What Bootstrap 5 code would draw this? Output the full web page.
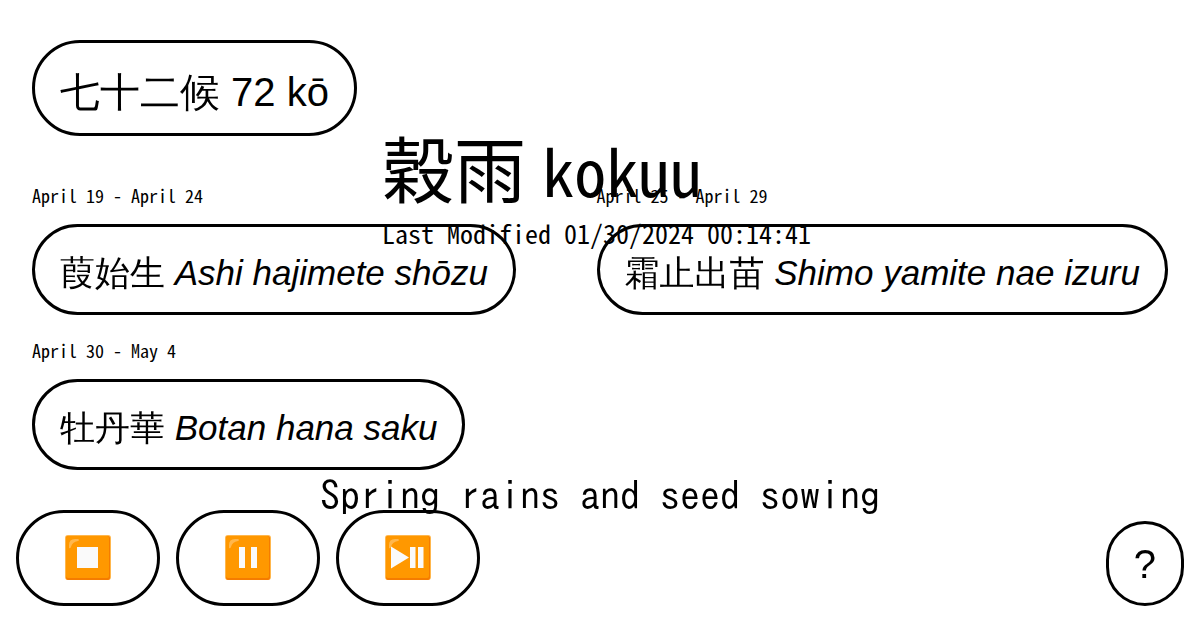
<!DOCTYPE html>
<html lang="ja">
<head>
<meta charset="utf-8">
<meta name="viewport" content="width=device-width, initial-scale=1">
<title>穀雨 kokuu</title>
<link href="https://cdn.jsdelivr.net/npm/bootstrap@5.3.0/dist/css/bootstrap.min.css" rel="stylesheet">
<style>
  body { color: #000; background: #fff; font-family: "Noto Sans Mono CJK JP", "Noto Sans CJK JP", monospace; }
  .pill { display: inline-block; border: 3px solid #000; border-radius: 50px; padding: 25px 25px 17px; background: transparent; color: #000; font-family: "Liberation Sans", "WenQuanYi Zen Hei", "Noto Sans CJK JP", sans-serif; font-size: 40px; line-height: 48px; text-decoration: none; white-space: nowrap; }
  .pill:hover { background: #eee; color: #000; }
  .pill-ko { font-size: 35px; line-height: 40px; padding: 26px 25px 19px; }
  .pill-icon { padding: 22px 46px; line-height: 45px; }
  .pill-help { padding: 16px 25px 15px; }
  .pill svg { display: block; }
  .site-top { padding-top: 40px; }
  .ko-list { padding-top: 50px; row-gap: 26px; }
  .ko-date { font-size: 18px; line-height: 18px; margin-bottom: 20px; }
  .term { top: 122px; z-index: 2; pointer-events: none; }
  .term-block { min-width: 436px; }
  .term-title { font-family: "Noto Sans CJK JP", sans-serif; font-size: 72px; font-weight: 400; line-height: 88px; margin: 0; }
  .term-title span { font-family: "Noto Sans Mono CJK JP", monospace; font-size: 64px; }
  .term-date { font-size: 26px; line-height: 40px; margin: 0; }
  .term-note { font-family: IPAGothic, "Noto Sans Mono CJK JP", monospace; font-size: 40px; line-height: 48px; bottom: 111px; z-index: 2; pointer-events: none; }
</style>
</head>
<body>
<header class="site-top px-3 mx-3">
  <a class="pill" href="#">七十二候 72 kō</a>
</header>
<div class="term position-absolute start-0 end-0 d-flex justify-content-center">
  <div class="term-block">
    <h1 class="term-title">穀雨 <span>kokuu</span></h1>
    <p class="term-date">Last Modified 01/30/2024 00:14:41</p>
  </div>
</div>
<main class="ko-list px-3 mx-3 d-flex flex-wrap justify-content-between">
  <section><div class="ko-date">April 19 - April 24</div><a class="pill pill-ko" href="#">葭始生 <i>Ashi hajimete shōzu</i></a></section>
  <section><div class="ko-date">April 25 - April 29</div><a class="pill pill-ko" href="#">霜止出苗 <i>Shimo yamite nae izuru</i></a></section>
  <section><div class="ko-date">April 30 - May 4</div><a class="pill pill-ko" href="#">牡丹華 <i>Botan hana saku</i></a></section>
</main>
<p class="term-note position-fixed start-0 end-0 text-center m-0">Spring rains and seed sowing</p>
<footer class="fixed-bottom d-flex justify-content-between align-items-end px-3 pb-4">
  <svg width="0" height="0" class="position-absolute" aria-hidden="true">
    <symbol id="tile" viewBox="0 0 46 46">
      <rect x="0" y="0" width="46" height="45" rx="3" fill="#ffb74d"/>
      <rect x="1" y="1" width="44" height="44" rx="2" fill="#f57c00"/>
      <rect x="1" y="1" width="43" height="42" rx="2" fill="#ff9800"/>
      <path d="M4 13V10Q4 4 10 4h3q2 1 0 2Q7 7 6 12q-1 2-2 1z" fill="#ffb74d"/>
    </symbol>
  </svg>
  <div class="d-flex gap-3">
    <button type="button" class="pill pill-icon" aria-label="Stop"><svg width="46" height="46" viewBox="0 0 46 46"><use href="#tile"/><path d="M12 12H33V33H12z" fill="#fafafa"/></svg></button>
    <button type="button" class="pill pill-icon" aria-label="Pause"><svg width="46" height="46" viewBox="0 0 46 46"><use href="#tile"/><path d="M14 12h6v21h-6zM26 12h6v21h-6z" fill="#fafafa"/></svg></button>
    <button type="button" class="pill pill-icon" aria-label="Play or pause"><svg width="46" height="46" viewBox="0 0 46 46"><use href="#tile"/><path d="M6 11.500 24 22.500 6 33.500zM25 12h5.500v21H25zM33 12h5.500v21H33z" fill="#fafafa"/></svg></button>
  </div>
  <button type="button" class="pill pill-help" aria-label="Help">?</button>
</footer>
</body>
</html>
